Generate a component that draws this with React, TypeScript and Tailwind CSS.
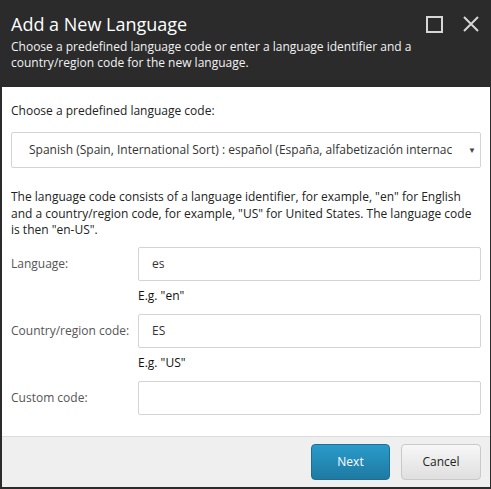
export default function App() {
  return (
    <div className="w-[491px] h-[489px] bg-[#2b2b2b] p-[1px] pl-[2px] pb-[2px] font-['Open_Sans',sans-serif]">
      <div className="flex h-full flex-col bg-white">
        {/* header */}
        <div className="h-[86px] bg-[#2b2b2b] pl-[9px] pr-[10px] pt-[11px]">
          <div className="flex items-center justify-between">
            <h1 className="text-[18px] leading-[24px] text-white">Add a New Language</h1>
            <div className="flex items-center gap-[20px] pr-[1px]">
              <svg width="17" height="17" viewBox="0 0 17 17">
                <rect x="1" y="1" width="15" height="15" fill="none" stroke="#d6d6d6" strokeWidth="2" />
              </svg>
              <svg width="16" height="16" viewBox="0 0 16 16">
                <path d="M1 1L15 15M15 1L1 15" stroke="#d6d6d6" strokeWidth="2" />
              </svg>
            </div>
          </div>
          <p className="mt-[3px] text-[12px] leading-[16px] text-[#f2f2f2]">
            Choose a predefined language code or enter a language identifier and a country/region code for the new
            language.
          </p>
        </div>

        {/* body */}
        <div className="flex-1 px-[9px] pt-[16px] text-[12px] text-[#222]">
          <div className="leading-[16px]">Choose a predefined language code:</div>
          <div className="mt-[13px] flex h-[36px] items-center rounded-[2px] border border-[#d4d4d4] pl-[17px] pr-[4px]">
            <span className="flex-1 overflow-hidden whitespace-nowrap text-[#333]">
              Spanish (Spain, International Sort) : español (España, alfabetización internac
            </span>
            <span className="ml-[16px] text-[8px] text-[#444]">▼</span>
          </div>

          <p className="mt-[21px] pr-[4px] leading-[16.5px]">
            The language code consists of a language identifier, for example, "en" for English and a country/region
            code, for example, "US" for United States. The language code is then "en-US".
          </p>

          <div className="mt-[8px] flex flex-col">
            <div className="flex items-center">
              <label className="w-[127px] text-[#555]">Language:</label>
              <div className="flex h-[34px] flex-1 items-center rounded-[2px] border border-[#d4d4d4] px-[13px] text-[#333]">
                es
              </div>
            </div>
            <div className="ml-[127px] mt-[7px] h-[26px] leading-[16px] text-[#111]">E.g. "en"</div>

            <div className="flex items-center">
              <label className="w-[127px] text-[#555]">Country/region code:</label>
              <div className="flex h-[34px] flex-1 items-center rounded-[2px] border border-[#d4d4d4] px-[13px] text-[#333]">
                ES
              </div>
            </div>
            <div className="ml-[127px] mt-[7px] h-[26px] leading-[16px] text-[#111]">E.g. "US"</div>

            <div className="flex items-center">
              <label className="w-[127px] text-[#555]">Custom code:</label>
              <div className="h-[34px] flex-1 rounded-[2px] border border-[#d4d4d4]" />
            </div>
          </div>
        </div>

        {/* footer */}
        <div className="flex h-[51px] items-center justify-end gap-[11px] border-t border-[#dcdcdc] bg-[#efefef] pr-[9px]">
          <button className="h-[36px] w-[79px] rounded-[4px] border border-[#1c6f93] bg-gradient-to-b from-[#2a9bca] to-[#1e7aa2] text-[12px] text-white">
            Next
          </button>
          <button className="h-[36px] w-[80px] rounded-[4px] border border-[#c9c9c9] bg-gradient-to-b from-[#f7f7f7] to-[#dfdfdf] text-[12px] text-[#222]">
            Cancel
          </button>
        </div>
      </div>
    </div>
  );
}
